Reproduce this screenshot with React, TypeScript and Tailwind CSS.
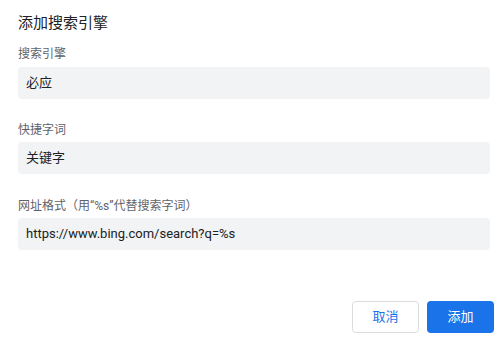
import React from 'react';

const fields = [
  { label: '搜索引擎', value: '必应', top: 'mt-[13px]', gap: 'mb-[5px]' },
  { label: '快捷字词', value: '关键字', top: 'mt-[23px]', gap: 'mb-1' },
  { label: '网址格式（用“%s”代替搜索字词）', value: 'https://www.bing.com/search?q=%s', top: 'mt-6', gap: 'mb-1' },
];

const App: React.FC = () => {
  return (
    <div
      className="w-[504px] h-[345px] bg-white flex flex-col pt-[13px] pl-[18px] pr-[14px]"
      style={{ fontFamily: 'Roboto, "Noto Sans CJK SC", sans-serif' }}
    >
      <h1 className="text-[15px] leading-5 text-[#202124] font-normal">添加搜索引擎</h1>

      {fields.map((f) => (
        <div key={f.label} className={f.top}>
          <label className={`block text-[12px] leading-4 text-[#5f6368] ${f.gap}`}>{f.label}</label>
          <div className="h-8 rounded bg-[#f1f3f4] flex items-center px-2 text-[13px] text-[#202124]">
            {f.value}
          </div>
        </div>
      ))}

      <div className="flex justify-end gap-2 mt-[51px] -mr-1">
        <button className="w-[67px] h-8 rounded border border-[#dadce0] bg-white text-[13px] text-[#1a73e8]">
          取消
        </button>
        <button className="w-[67px] h-8 rounded bg-[#1a73e8] text-[13px] text-white">
          添加
        </button>
      </div>
    </div>
  );
};

export default App;
